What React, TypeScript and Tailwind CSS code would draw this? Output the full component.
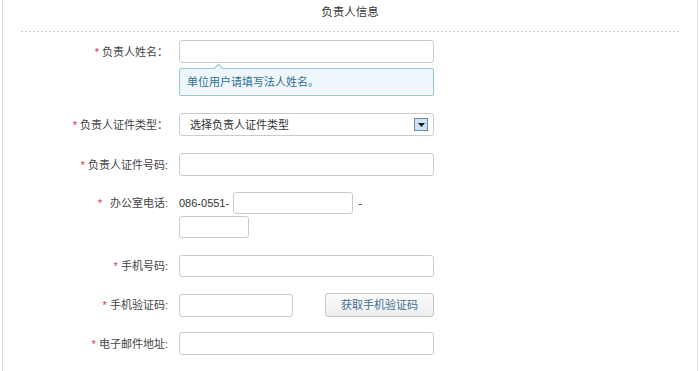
import type { ReactNode } from 'react';

function Label({ children }: { children: ReactNode }) {
  return (
    <div className="w-[165px] shrink-0 text-right text-[#444]">
      <span className="text-[#d0384c]">*</span> {children}
    </div>
  );
}

function TextInput({ w = 'w-[255px]', h = 'h-[23px]', extra = '' }: { w?: string; h?: string; extra?: string }) {
  return <div className={`border border-[#cbcbcb] rounded-[3px] bg-white ${w} ${h} ${extra}`} />;
}

function Row({ label, children, className = '' }: { label: string; children: ReactNode; className?: string }) {
  return (
    <div className={`flex items-center ${className}`}>
      <Label>{label}</Label>
      <div className="ml-[11px] flex items-center">{children}</div>
    </div>
  );
}

export default function App() {
  return (
    <div className="w-[700px] h-[371px] bg-white overflow-hidden font-['Liberation_Sans','Noto_Sans_CJK_SC',sans-serif] text-[11px] leading-[16px]">
      <div className="ml-[2px] w-[696px] h-full border-x border-[#dcdcdc]">
        <div className="h-[31px] pt-[4px] text-center text-[11.5px] text-[#333]">负责人信息</div>
        <div className="mx-[18px] h-px bg-[repeating-linear-gradient(to_right,#c8c8c8_0_2px,transparent_2px_4px)]" />

        <Row label="负责人姓名：" className="mt-[8px] h-[23px]">
          <TextInput />
        </Row>
        <div className="ml-[176px] mt-[5px] relative w-[255px] h-[28px] border border-[#96c9d6] rounded-[2px] bg-[#eef8fc] flex items-center pl-[7px] text-[#2f6f8f]">
          单位用户请填写法人姓名。
          <span className="absolute -top-[4px] left-[35px] w-[7px] h-[7px] rotate-45 border-l border-t border-[#96c9d6] bg-[#eef8fc]" />
        </div>

        <Row label="负责人证件类型：" className="mt-[17px] h-[23px]">
          <div className="h-[23px] w-[255px] border border-[#cbcbcb] rounded-[3px] bg-white flex items-center justify-between pl-[10px] pr-[5px] text-[#333]">
            选择负责人证件类型
            <span className="w-[14px] h-[13px] border border-[#6b8aa6] bg-[#cde2f2] flex items-center justify-center">
              <svg width="7" height="4" viewBox="0 0 7 4"><path d="M0 0h7L3.5 4z" fill="#111" /></svg>
            </span>
          </div>
        </Row>

        <Row label="负责人证件号码:" className="mt-[17px] h-[23px]">
          <TextInput />
        </Row>

        <div className="mt-[16px] flex h-[45px]">
          <div className="w-[165px] shrink-0 text-[#444] h-[22px] flex items-center justify-end">
            <span className="text-[#d0384c]">*</span>
            <span className="ml-[8px]">办公室电话:</span>
          </div>
          <div className="ml-[11px] w-[270px]">
            <div className="flex items-center h-[22px]">
              <span className="text-[#333]">086-0551-</span>
              <TextInput w="w-[120px]" h="h-[22px]" extra="ml-[4px]" />
              <span className="ml-[5px] text-[#333]">-</span>
            </div>
            <TextInput w="w-[70px]" h="h-[22px]" extra="mt-[2px]" />
          </div>
        </div>

        <Row label="手机号码:" className="mt-[18px] h-[22px]">
          <TextInput h="h-[22px]" />
        </Row>

        <Row label="手机验证码:" className="mt-[16px] h-[24px]">
          <TextInput w="w-[114px]" />
          <button className="ml-[32px] -mt-px h-[24px] w-[109px] border border-[#c6c6c6] rounded-[3px] bg-[linear-gradient(#fbfbfb,#ededed)] text-[#3b6f98] text-[11px]">
            获取手机验证码
          </button>
        </Row>

        <Row label="电子邮件地址:" className="mt-[15px] h-[23px]">
          <TextInput />
        </Row>
      </div>
    </div>
  );
}
